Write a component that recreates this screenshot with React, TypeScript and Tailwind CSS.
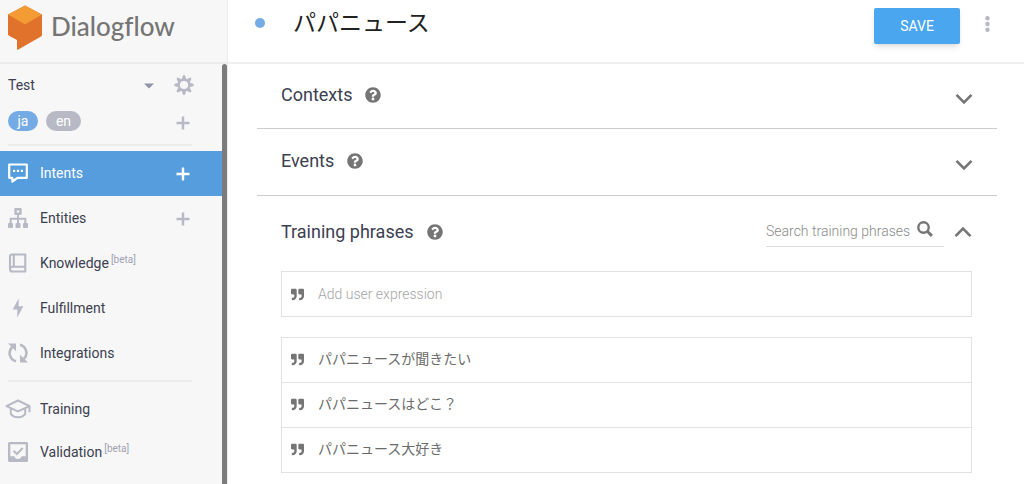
import React from 'react';
import { FaQuestionCircle, FaQuoteRight } from 'react-icons/fa';

interface NavItemData {
  label: string;
  icon: React.ReactNode;
  beta?: boolean;
  canAdd?: boolean;
  active?: boolean;
}

const LogoMark = () => (
  <svg width="36" height="46" viewBox="0 0 36 46" aria-hidden="true">
    <path d="M1 10.500 18 1.500l17 9v20.300q0 1.100-1 1.700L11.300 45.600q-1.300.7-1.300-.8V36L2 31.800q-1-.5-1-1.700z" fill="#e0722c" />
    <path d="M1.300 10.700 17 1.900q1-.6 2 0l15.700 8.800L19 19.700q-1 .6-2 0z" fill="#f39c34" />
  </svg>
);

const GearIcon = () => (
  <svg width="20" height="20" viewBox="-10 -10 20 20" fill="currentColor" aria-hidden="true">
    <circle r="5.300" fill="none" stroke="currentColor" strokeWidth="2.400" />
    {[0, 45, 90, 135, 180, 225, 270, 315].map((angle) => (
      <path key={angle} d="M-2.300 -5.800 -1 -9.700H1L2.300 -5.800z" transform={`rotate(${angle})`} />
    ))}
  </svg>
);

const PlusIcon = () => (
  <svg width="14" height="14" viewBox="0 0 14 14" aria-hidden="true">
    <path d="M7 .5v13M.5 7h13" stroke="currentColor" strokeWidth="2.400" />
  </svg>
);

const IntentsIcon = () => (
  <svg width="20" height="20" viewBox="0 0 20 20" fill="none" aria-hidden="true">
    <path d="M1.200 1.500h17.600v13.300H9.500L4.300 18.500v-3.700H1.200z" stroke="currentColor" strokeWidth="2.200" strokeLinejoin="round" />
    <path d="M5 7.800h2.200M8.900 7.800h2.200M12.800 7.800H15" stroke="currentColor" strokeWidth="2.200" />
  </svg>
);

const EntitiesIcon = () => (
  <svg width="20" height="20" viewBox="0 0 20 20" fill="none" aria-hidden="true">
    <path d="M7.500 1.300h5v4.500h-5z" stroke="currentColor" strokeWidth="2.400" strokeLinejoin="round" />
    <path d="M10 6.500V16M2.700 16v-5.300h14.600V16" stroke="currentColor" strokeWidth="2" />
    <rect x="0" y="15" width="5" height="5" rx="1" fill="currentColor" />
    <rect x="7.500" y="15" width="5" height="5" rx="1" fill="currentColor" />
    <rect x="15" y="15" width="5" height="5" rx="1" fill="currentColor" />
  </svg>
);

const KnowledgeIcon = () => (
  <svg width="20" height="20" viewBox="0 0 20 20" fill="none" stroke="currentColor" strokeWidth="2.100" aria-hidden="true">
    <path d="M4 1.500h13.300v17H4.200Q2 18.500 2 16.300V3.500q0-2 2-2z" strokeLinejoin="round" />
    <path d="M5.800 1.500v12.300M2.200 16q0-2.200 2.200-2.200h12.900" />
  </svg>
);

const FulfillmentIcon = () => (
  <svg width="20" height="20" viewBox="0 0 20 20" fill="currentColor" aria-hidden="true">
    <path d="M10.600.5 4.700 11.600h4.600L9.200 19.500 15.400 8.200h-4.700z" />
  </svg>
);

const IntegrationsIcon = () => (
  <svg width="20" height="20" viewBox="0 0 20 20" fill="currentColor" aria-hidden="true">
    <path d="M8 18.300A8.500 8.500 0 0 1 4.200 4M12 1.700A8.500 8.500 0 0 1 15.800 16" fill="none" stroke="currentColor" strokeWidth="2.600" />
    <path d="M0 .5h8v7.700zM20 19.500h-8v-7.700z" />
  </svg>
);

const TrainingIcon = () => (
  <svg className="shrink-0" width="26" height="20" viewBox="0 0 26 20" fill="none" stroke="currentColor" strokeWidth="2" strokeLinejoin="round" aria-hidden="true">
    <path d="M1.500 7.200 13 1.500l11.500 5.700L13 12.400z" />
    <path d="M5.800 9.500v5.600Q8.500 18.300 13 18.300t7.200-3.200V9.500M24.500 7.200v6" />
  </svg>
);

const ValidationIcon = () => (
  <svg width="20" height="20" viewBox="0 0 20 20" aria-hidden="true">
    <path fillRule="evenodd" fill="currentColor" d="M1.500 0h17Q20 0 20 1.500v17q0 1.500-1.500 1.500h-17Q0 20 0 18.500v-17Q0 0 1.500 0zM2.300 2.300v12h4.200Q7 17 10 17t3.500-2.700h4.200v-12z" />
    <path d="M5.500 8.700 8.900 12l5.800-6" fill="none" stroke="currentColor" strokeWidth="2" />
  </svg>
);

const Chevron = ({ up = false }: { up?: boolean }) => (
  <svg width="18" height="12" viewBox="0 0 18 12" fill="none" stroke="#757575" strokeWidth="2.600" aria-hidden="true">
    <path d={up ? 'M1.500 10.200 9 2.700l7.500 7.500' : 'M1.500 1.800 9 9.300l7.500-7.500'} />
  </svg>
);

const SearchIcon = () => (
  <svg width="16" height="16" viewBox="0 0 16 16" fill="none" stroke="#757575" aria-hidden="true">
    <circle cx="6.500" cy="6.500" r="5.200" strokeWidth="2.400" />
    <path d="m10.300 10.300 4.600 4.600" strokeWidth="2.900" />
  </svg>
);

const mainNav: NavItemData[] = [
  { label: 'Intents', icon: <IntentsIcon />, canAdd: true, active: true },
  { label: 'Entities', icon: <EntitiesIcon />, canAdd: true },
  { label: 'Knowledge', icon: <KnowledgeIcon />, beta: true },
  { label: 'Fulfillment', icon: <FulfillmentIcon /> },
  { label: 'Integrations', icon: <IntegrationsIcon /> },
];

const toolsNav: NavItemData[] = [
  { label: 'Training', icon: <TrainingIcon /> },
  { label: 'Validation', icon: <ValidationIcon />, beta: true },
];

const phrases = ['パパニュースが聞きたい', 'パパニュースはどこ？', 'パパニュース大好き'];

const NavItem = ({ item, className }: { item: NavItemData; className: string }) => (
  <li className={`flex items-center justify-between pl-2 pr-8 ${className} ${item.active ? 'bg-[#569ddd] text-white' : 'text-[#b7b9c5]'}`}>
    <a href="#" className="flex items-center gap-3 pb-0.5">
      <span className="flex w-5 shrink-0 justify-center">{item.icon}</span>
      <span className={item.active ? 'text-white' : 'text-[#3c4050]'}>
        {item.label}
        {item.beta && <sup className="ml-0.5 text-[10px] text-[#9fa2b2]">[beta]</sup>}
      </span>
    </a>
    {item.canAdd && (
      <button type="button" aria-label={`Add ${item.label}`}>
        <PlusIcon />
      </button>
    )}
  </li>
);

const SectionTitle = ({ title }: { title: string }) => (
  <div className="flex items-center gap-[13px]">
    <h2 className="text-lg leading-6 text-[#3c4050]">{title}</h2>
    <button type="button" aria-label={`${title} help`}>
      <FaQuestionCircle className="h-4 w-4 text-[#757575]" />
    </button>
  </div>
);

const CollapsedSection = ({ title, className }: { title: string; className: string }) => (
  <section className={`flex items-center justify-between border-b border-[#cfcccc] px-6 pb-0.5 ${className}`}>
    <SectionTitle title={title} />
    <button type="button" aria-label={`Expand ${title}`} className="pt-2">
      <Chevron />
    </button>
  </section>
);

const Sidebar = () => (
  <aside className="flex w-[228px] shrink-0 flex-col bg-[#f7f7f7] text-sm">
    <div className="flex h-16 items-start gap-2 border-r border-b-2 border-[#ececec] pt-1 pl-[7px]">
      <LogoMark />
      <span className="font-[Lato] text-[26px] leading-[44px] font-medium text-[#757575] [font-variant-ligatures:none]">Dialogflow</span>
    </div>
    <div className="flex flex-1 border-r border-[#ececec]">
      <div className="flex-1">
        <div className="flex h-[43px] items-center gap-5 pr-7 pb-0.5 pl-2">
          <div className="relative flex-1">
            <select aria-label="Agent" className="w-full appearance-none bg-transparent text-[#3c4050]">
              <option>Test</option>
            </select>
            <svg className="pointer-events-none absolute top-2 right-0" width="10" height="6" viewBox="0 0 10 6" aria-hidden="true">
              <path d="M0 .5h10L5 5.500z" fill="#8f94a8" />
            </svg>
          </div>
          <button type="button" aria-label="Agent settings" className="text-[#b7b9c5]">
            <GearIcon />
          </button>
        </div>
        <div className="flex h-7 items-center gap-2 pr-8 pl-2 text-white">
          <button type="button" className="h-5 w-[30px] rounded-full bg-[#74abe4] leading-5">ja</button>
          <button type="button" className="h-5 w-[35px] rounded-full bg-[#b7b9c5] leading-5">en</button>
          <button type="button" aria-label="Add language" className="ml-auto pt-1 text-[#b7b9c5]">
            <PlusIcon />
          </button>
        </div>
        <hr className="mt-[9px] mr-[30px] mb-[5px] ml-2 border-t-2 border-[#ececec]" />
        <ul>
          {mainNav.map((item) => (
            <NavItem key={item.label} item={item} className="h-[45px]" />
          ))}
        </ul>
        <hr className="mt-1 mr-[30px] mb-[6px] ml-2 border-t-2 border-[#ececec]" />
        <ul>
          {toolsNav.map((item) => (
            <NavItem key={item.label} item={item} className="h-[43px]" />
          ))}
        </ul>
      </div>
      <div className="w-[5px] rounded-t-full bg-[#7c7c7c]" />
    </div>
  </aside>
);

const App: React.FC = () => (
  <div className="flex min-h-screen bg-white font-[Roboto,'Noto_Sans_CJK_JP',sans-serif]">
    <Sidebar />
    <main className="min-w-0 flex-1">
      <header className="flex h-16 items-start border-b-2 border-[#f0f0f0] pt-2 pr-[34px] pl-[27px]">
        <span className="mt-[10px] h-[10px] w-[10px] shrink-0 rounded-full bg-[#74abe4]" />
        <input
          aria-label="Intent name"
          defaultValue="パパニュース"
          className="ml-7 h-8 min-w-0 flex-1 text-[23px] leading-8 text-[#212121] outline-none"
        />
        <button type="button" className="h-9 w-[86px] rounded-[2px] bg-[#4aa6ef] text-sm text-white shadow-md">
          SAVE
        </button>
        <button type="button" aria-label="More actions" className="mt-2 ml-[25px]">
          <svg width="5" height="16" viewBox="0 0 5 16" fill="#b7b9c5" aria-hidden="true">
            <circle cx="2.500" cy="2.300" r="2.200" />
            <circle cx="2.500" cy="8" r="2.200" />
            <circle cx="2.500" cy="13.700" r="2.200" />
          </svg>
        </button>
      </header>

      <div className="pr-[27px] pl-[29px]">
        <CollapsedSection title="Contexts" className="h-[65px]" />
        <CollapsedSection title="Events" className="h-[67px]" />

        <section className="pr-[25px] pb-3 pl-6">
          <div className="flex h-[75px] items-center pb-1">
            <SectionTitle title="Training phrases" />
            <label className="ml-auto flex h-[30px] items-center border-b border-[#dedede]">
              <input
                type="text"
                placeholder="Search training phrases"
                className="w-[151px] text-sm font-light outline-none placeholder:text-[#8a8a8a]"
              />
              <span className="mr-[11px] pb-1">
                <SearchIcon />
              </span>
            </label>
            <button type="button" aria-label="Collapse Training phrases" className="ml-[10px]">
              <Chevron up />
            </button>
          </div>

          <label className="flex h-[46px] items-center gap-[14px] border border-[#e2e2e2] px-[9px]">
            <FaQuoteRight className="h-[13px] w-[13px] text-[#757575]" />
            <input
              aria-label="Add user expression"
              placeholder="Add user expression"
              className="min-w-0 flex-1 text-sm font-light outline-none placeholder:text-[#a5a5a5]"
            />
          </label>

          <ul className="mt-5 border border-b-0 border-[#e2e2e2]">
            {phrases.map((phrase) => (
              <li key={phrase} className="flex h-[45px] items-center gap-[14px] border-b border-[#e2e2e2] px-[9px] pb-0.5 text-sm text-[#6b6b6b]">
                <FaQuoteRight className="h-[13px] w-[13px] text-[#757575]" />
                {phrase}
              </li>
            ))}
          </ul>
        </section>
      </div>
    </main>
  </div>
);

export default App;
